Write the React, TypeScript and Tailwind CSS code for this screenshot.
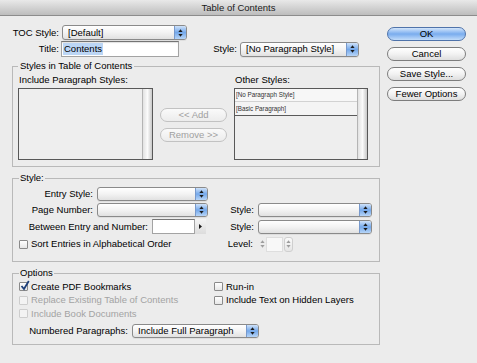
import type { ReactNode } from "react";

function Arrows({ color = "#1a1a1a" }: { color?: string }) {
  return (
    <svg width="5" height="8" viewBox="0 0 5 8">
      <path d="M2.5 0.3L4.6 3H0.4Z" fill={color} />
      <path d="M0.4 5H4.6L2.5 7.7Z" fill={color} />
    </svg>
  );
}

function Popup({ className, text }: { className: string; text?: string }) {
  return (
    <div
      className={`flex items-stretch overflow-hidden rounded-[3px] border border-[#8a8a8a] bg-gradient-to-b from-white via-[#f3f3f3] to-[#e1e1e1] shadow-[0_1px_0_rgba(0,0,0,0.06)] ${className}`}
    >
      <span className="flex flex-1 items-center truncate pl-[5px]">{text}</span>
      <span className="flex w-[12px] items-center justify-center border-l border-[#7799cc] bg-gradient-to-b from-[#cfe2f9] via-[#74a8ea] to-[#b7d5f7]">
        <Arrows />
      </span>
    </div>
  );
}

function Pill({
  children,
  kind = "normal",
}: {
  children: ReactNode;
  kind?: "normal" | "default" | "disabled";
}) {
  if (kind === "default") {
    return (
      <div className="flex h-[14px] items-center justify-center rounded-full border border-[#4f73aa] bg-gradient-to-b from-[#d3e5fa] via-[#79acee] to-[#c2dcf9]">
        {children}
      </div>
    );
  }
  if (kind === "disabled") {
    return (
      <div className="flex h-[14px] items-center justify-center rounded-full border border-[#c2c2c2] bg-gradient-to-b from-[#fafafa] to-[#ececec] text-[#a0a0a0]">
        {children}
      </div>
    );
  }
  return (
    <div className="flex h-[14px] items-center justify-center rounded-full border border-[#7d7d7d] bg-gradient-to-b from-white via-[#f2f2f2] to-[#dedede]">
      {children}
    </div>
  );
}

function Check({
  label,
  checked = false,
  disabled = false,
}: {
  label: string;
  checked?: boolean;
  disabled?: boolean;
}) {
  return (
    <div className="flex items-center">
      <span
        className={
          disabled
            ? "relative h-[9px] w-[9px] shrink-0 rounded-[1px] border border-[#cdcdcd] bg-[#f3f3f3]"
            : "relative h-[9px] w-[9px] shrink-0 rounded-[1px] border border-[#8a8a8a] bg-gradient-to-b from-white to-[#e6e6e6]"
        }
      >
        {checked && (
          <svg className="absolute left-[0px] top-[-3px]" width="10" height="11" viewBox="0 0 10 11">
            <path d="M1.5 6L4 9L8.8 1" fill="none" stroke="#1d3f7a" strokeWidth="1.8" />
          </svg>
        )}
      </span>
      <span className={disabled ? "ml-[3px] text-[#a3a3a3]" : "ml-[3px]"}>{label}</span>
    </div>
  );
}

function Scroll() {
  return (
    <div className="w-[10px] border-l border-[#b4b4b4] bg-gradient-to-r from-[#e2e2e2] via-[#fbfbfb] to-[#c9c9c9]" />
  );
}

export default function App() {
  return (
    <div className="flex h-[363px] w-[477px] flex-col overflow-hidden bg-[#ececec] font-['Liberation_Sans',Arial,sans-serif] text-[9.5px] leading-[12px] text-black">
      <div className="h-[16px] shrink-0 border-b border-[#8c8c8c] bg-gradient-to-b from-[#e9e9e9] to-[#bdbdbd] text-center leading-[15px] text-[#1a1a1a]">
        Table of Contents
      </div>

      <div className="flex items-start">
        <div className="ml-[12px] w-[368px] pt-[9px]">
          <div className="flex h-[15px] items-center">
            <span className="w-[47px] text-right">TOC Style:</span>
            <Popup className="ml-[3px] h-[15px] w-[125px]" text="[Default]" />
          </div>
          <div className="mt-[1px] flex h-[16px] items-center">
            <span className="w-[47px] text-right">Title:</span>
            <div className="ml-[2px] flex h-[16px] w-[118px] items-center border border-[#a3a3a3] border-t-[#747474] bg-white pl-[1px] shadow-[inset_0_1px_1px_rgba(0,0,0,0.12)]">
              <span className="bg-[#bcd6f5] px-[1px]">Contents</span>
            </div>
            <span className="ml-[32px] w-[26px] text-right">Style:</span>
            <Popup className="ml-[3px] h-[15px] w-[119px]" text="[No Paragraph Style]" />
          </div>

          <fieldset className="mt-[3px] border border-[#b9b9b9] pb-[6px] pl-[5px]">
            <legend className="px-[2px]">Styles in Table of Contents</legend>
            <div className="flex">
              <div className="w-[135px]">
                <div className="mt-[2px] h-[12px] pl-[1px]">Include Paragraph Styles:</div>
                <div className="mt-[2px] flex h-[72px] border border-[#585858] bg-[#eeeeee]">
                  <div className="flex-1" />
                  <Scroll />
                </div>
              </div>
              <div className="ml-[7px] flex w-[67px] flex-col gap-[6px] pt-[36px]">
                <Pill kind="disabled">&lt;&lt; Add</Pill>
                <Pill kind="disabled">Remove &gt;&gt;</Pill>
              </div>
              <div className="ml-[7px] w-[134px]">
                <div className="mt-[2px] h-[12px] pl-[1px]">Other Styles:</div>
                <div className="mt-[2px] flex h-[72px] border border-[#585858] bg-[#eeeeee]">
                  <div className="flex-1">
                    <div className="flex h-[13px] items-center border-b border-[#d2d2d2] bg-[#f7f7f7] pl-[1px] text-[6.3px] leading-[8px] text-[#333]">
                      [No Paragraph Style]
                    </div>
                    <div className="flex h-[14px] items-center border-b border-[#5a5a5a] bg-[#f4f4f4] pl-[1px] text-[6.3px] leading-[8px] text-[#333]">
                      [Basic Paragraph]
                    </div>
                  </div>
                  <Scroll />
                </div>
              </div>
            </div>
          </fieldset>

          <fieldset className="mt-[5px] border border-[#b9b9b9] pb-[8px] pl-[6px]">
            <legend className="px-[1px]">Style:</legend>
            <div className="mt-[2px] flex h-[15px] items-center">
              <div className="flex w-[206px] items-center">
                <span className="w-[74px] text-right">Entry Style:</span>
                <Popup className="ml-[4px] h-[14px] w-[111px]" />
              </div>
            </div>
            <div className="mt-[1px] flex h-[16px] items-center">
              <div className="flex w-[206px] items-center">
                <span className="w-[74px] text-right">Page Number:</span>
                <Popup className="ml-[4px] h-[14px] w-[111px]" />
              </div>
              <span className="w-[29px] text-right">Style:</span>
              <Popup className="ml-[4px] h-[14px] w-[114px]" />
            </div>
            <div className="flex h-[17px] items-center">
              <div className="flex w-[206px] items-center">
                <span className="w-[129px] text-right">Between Entry and Number:</span>
                <div className="ml-[4px] h-[15px] w-[43px] border border-[#a3a3a3] border-t-[#767676] bg-white" />
                <div className="flex h-[15px] w-[11px] items-center justify-center bg-gradient-to-b from-[#f4f4f4] to-[#dcdcdc]">
                  <svg width="3" height="5" viewBox="0 0 3 5">
                    <path d="M0 0L3 2.5L0 5Z" fill="#1a1a1a" />
                  </svg>
                </div>
              </div>
              <span className="w-[29px] text-right">Style:</span>
              <Popup className="ml-[4px] h-[14px] w-[114px]" />
            </div>
            <div className="flex h-[18px] items-center">
              <div className="w-[206px]">
                <Check label="Sort Entries in Alphabetical Order" />
              </div>
              <span className="w-[28px] text-right">Level:</span>
              <div className="ml-[6px] flex h-[15px] w-[34px] items-stretch">
                <div className="flex w-[7px] items-center justify-center">
                  <Arrows color="#9d9d9d" />
                </div>
                <div className="w-[17px] border border-[#dedede] bg-[#f8f8f8]" />
                <div className="ml-[1px] flex w-[9px] items-center justify-center rounded-[3px] border border-[#cfcfcf] bg-gradient-to-b from-[#fafafa] to-[#e6e6e6]">
                  <Arrows color="#9d9d9d" />
                </div>
              </div>
            </div>
          </fieldset>

          <fieldset className="mt-[5px] border border-[#b9b9b9] pb-[6px] pl-[6px]">
            <legend className="px-[1px]">Options</legend>
            <div className="mt-[1px] grid grid-cols-[195px_1fr]">
              <div className="flex h-[13px] items-center">
                <Check label="Create PDF Bookmarks" checked />
              </div>
              <div className="flex h-[13px] items-center">
                <Check label="Run-in" />
              </div>
              <div className="flex h-[14px] items-center">
                <Check label="Replace Existing Table of Contents" disabled />
              </div>
              <div className="flex h-[14px] items-center">
                <Check label="Include Text on Hidden Layers" />
              </div>
              <div className="flex h-[13px] items-center">
                <Check label="Include Book Documents" disabled />
              </div>
              <div />
            </div>
            <div className="mt-[3px] flex h-[15px] items-center">
              <span className="w-[109px] text-right">Numbered Paragraphs:</span>
              <Popup className="ml-[4px] h-[14px] w-[127px]" text="Include Full Paragraph" />
            </div>
          </fieldset>
        </div>

        <div className="ml-[7px] flex w-[79px] flex-col gap-[6px] pt-[11px]">
          <Pill kind="default">OK</Pill>
          <Pill>Cancel</Pill>
          <Pill>Save Style...</Pill>
          <Pill>Fewer Options</Pill>
        </div>
      </div>
    </div>
  );
}
